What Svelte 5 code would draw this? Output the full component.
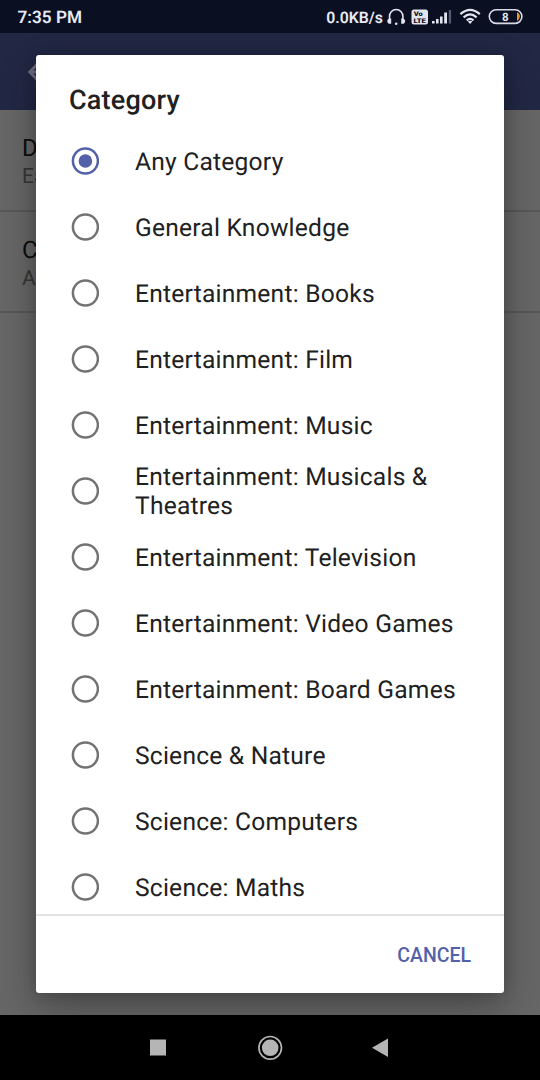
<script>
  const categories = [
    'Any Category', 'General Knowledge', 'Entertainment: Books', 'Entertainment: Film',
    'Entertainment: Music', 'Entertainment: Musicals & Theatres', 'Entertainment: Television',
    'Entertainment: Video Games', 'Entertainment: Board Games', 'Science & Nature',
    'Science: Computers', 'Science: Maths'
  ];
  const settings = [
    { title: 'Difficulty', value: 'Easy' },
    { title: 'Category', value: 'Any Category' }
  ];
  let selected = $state('Any Category');
</script>

<div class="screen">
  <header class="status">
    <span class="time">7:35 PM</span>
    <span class="speed">0.0KB/s</span>
    <svg class="icons" width="157" height="33" viewBox="383 0 157 33" fill="none">
      <path d="M389.5 22V16.5a6.7 7 0 0 1 13.4 0V22" stroke="#e2e5ef" stroke-width="1.6" />
      <path d="M389.5 18.5h1.7v5.2h-2.5q-1.5-1-1.5-2.7 0-1.8 2.3-2.5zM402.9 18.5h-1.7v5.2h2.5q1.5-1 1.5-2.7 0-1.8-2.3-2.5z" fill="#e2e5ef" />
      <circle cx="396.2" cy="23.8" r="1.3" fill="#e2e5ef" />
      <rect x="411.5" y="9.5" width="16.5" height="15" rx="2.5" fill="#e2e5ef" />
      <text x="413.8" y="15.6" class="volte" textLength="9" lengthAdjust="spacingAndGlyphs">Vo</text>
      <text x="413.4" y="23.3" class="volte" textLength="12.5" lengthAdjust="spacingAndGlyphs">LTE</text>
      <path d="M432 21h2.6v2.5H432zM436 19h2.6v4.5H436zM440 16.5h2.6v7H440zM444.2 12.5h2.8v11h-2.8z" fill="#e2e5ef" />
      <path d="M448.8 10h2.3v13.5h-2.3z" fill="#555b70" />
      <g stroke="#e2e5ef" stroke-width="2.2">
        <path d="M460.4 14.2q9.7-8.5 19.4 0M463.6 17.3q6.5-5.7 13 0M466.7 20.3q3.4-2.8 6.8 0" />
      </g>
      <path d="M467.8 21.6q2.3-1.6 4.6 0l-2.3 2.4z" fill="#e2e5ef" />
      <rect x="489.3" y="9.8" width="32.6" height="13.6" rx="6.8" stroke="#d8dbe5" stroke-width="1.6" />
      <path d="M517 12.3q2.8 1.2 2.8 4.3t-2.8 4.3z" fill="#e59b35" />
      <text x="505.2" y="20.8" class="charge">8</text>
    </svg>
  </header>

  <div class="toolbar">
    <svg width="24" height="24" viewBox="0 0 24 24" fill="none" stroke="#6d6f80" stroke-width="3">
      <path d="M23 12H3M12 2.5 2.8 12 12 21.5" />
    </svg>
  </div>
  <main>
    {#each settings as item}
      <section class="setting">
        <div class="name">{item.title}</div>
        <div class="value">{item.value}</div>
      </section>
    {/each}
  </main>

  <div class="dialog" role="dialog" aria-labelledby="title">
    <h1 id="title">Category</h1>
    <div class="list" role="radiogroup">
      {#each categories as category}
        <label class="row">
          <input type="radio" name="category" value={category} bind:group={selected} />
          <svg class="dot" width="28" height="28" viewBox="0 0 28 28">
            <circle class="ring" cx="14.4" cy="14" r="12.5" />
            {#if selected === category}
              <circle class="fill" cx="14.4" cy="14" r="6.8" />
            {/if}
          </svg>
          <span class="label">{category}</span>
        </label>
      {/each}
    </div>
    <footer><button>CANCEL</button></footer>
  </div>

  <nav>
    <svg width="540" height="65" viewBox="0 0 540 65" fill="#b5b5b5">
      <rect x="150" y="24.5" width="16" height="16" />
      <circle cx="270.2" cy="32.8" r="8.3" />
      <circle cx="270.2" cy="32.8" r="11.3" fill="none" stroke="#b5b5b5" stroke-width="1.7" />
      <path d="M372 32.8 388 23.6v18.4z" />
    </svg>
  </nav>
</div>

<style>
  :global(body) { margin: 0; overflow: hidden; }
  .screen {
    position: relative; width: 540px; height: 1080px; overflow: hidden;
    display: flex; flex-direction: column; background: #666;
    font-family: Roboto, sans-serif; text-rendering: geometricPrecision;
  }
  .status {
    height: 33px; flex: none; display: flex; align-items: center; background: #0a0f22;
    color: #e8ebf5; font-weight: 600;
  }
  .time { flex: 1; padding-left: 17.5px; padding-top: 2px; font-size: 17.2px; }
  .speed { padding-top: 1px; font-size: 15.8px; }
  .icons { flex: none; display: block; }
  .volte { font: 900 6.5px Roboto, sans-serif; fill: #0a0f22; }
  .charge { font: 700 11.5px Roboto, sans-serif; fill: #e2e5ef; text-anchor: middle; }
  .toolbar { height: 77px; flex: none; background: #222744; display: flex; align-items: center; padding-left: 27px; box-sizing: border-box; }
  main { flex: 1; min-height: 0; }
  .setting { height: 101.5px; box-sizing: border-box; padding: 24px 22px 0; border-bottom: 2px solid #585858; }
  .name { font-size: 24px; line-height: 29px; color: #0d0d0d; }
  .value { font-size: 21px; line-height: 28px; color: #363636; }
  .dialog {
    position: absolute; left: 36px; top: 55px; width: 468px; height: 938px;
    display: flex; flex-direction: column; background: #fff; border-radius: 3px;
    box-shadow: 0 14px 36px rgba(0, 0, 0, .3), 0 0 14px rgba(0, 0, 0, .15);
  }
  h1 { margin: 0; height: 73px; box-sizing: border-box; padding: 29px 33px 0; font-size: 27px; line-height: 33px; font-weight: 500; letter-spacing: .2px; color: #212121; }
  .list { height: 786px; overflow: hidden; }
  .row { height: 66px; display: flex; align-items: center; padding-left: 35px; box-sizing: border-box; }
  input { appearance: none; margin: 0; width: 0; height: 0; }
  .dot { flex: none; display: block; }
  .ring { fill: none; stroke: #737373; stroke-width: 2.5; }
  .fill { fill: #5362a8; }
  input:checked + .dot .ring { stroke: #5362a8; }
  .label { width: 330px; margin-left: 36px; font-size: 24.6px; line-height: 29px; letter-spacing: .22px; color: #212121; padding-top: 2px; }
  footer { flex: 1; border-top: 2px solid #e3e3e3; display: flex; justify-content: flex-end; align-items: center; padding: 2px 33px 0 0; }
  button { border: 0; background: none; padding: 0; font: 500 19.5px Roboto, sans-serif; color: #5362a8; }
  nav { height: 65px; flex: none; background: #000; position: relative; }
  nav svg { display: block; }
</style>
